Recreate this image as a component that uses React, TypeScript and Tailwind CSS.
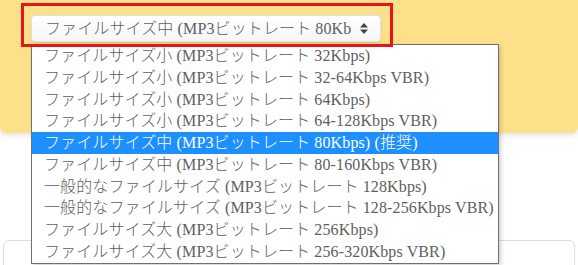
const options = [
  "ファイルサイズ小 (MP3ビットレート 32Kbps)",
  "ファイルサイズ小 (MP3ビットレート 32-64Kbps VBR)",
  "ファイルサイズ小 (MP3ビットレート 64Kbps)",
  "ファイルサイズ小 (MP3ビットレート 64-128Kbps VBR)",
  "ファイルサイズ中 (MP3ビットレート 80Kbps) (推奨)",
  "ファイルサイズ中 (MP3ビットレート 80-160Kbps VBR)",
  "一般的なファイルサイズ (MP3ビットレート 128Kbps)",
  "一般的なファイルサイズ (MP3ビットレート 128-256Kbps VBR)",
  "ファイルサイズ大 (MP3ビットレート 256Kbps)",
  "ファイルサイズ大 (MP3ビットレート 256-320Kbps VBR)",
];

const selected = 4;

export default function App() {
  return (
    <div className="relative w-[578px] h-[265px] overflow-hidden bg-white font-['Liberation_Serif','Noto_Sans_CJK_JP',serif] text-[16px] font-light tracking-[0.12px] text-[#606060]">
      {/* yellow panel */}
      <div className="h-[133px] rounded-b-[6px] bg-[#fde18a] pt-[15px] pl-[31px] shadow-[0_2px_6px_rgba(0,0,0,0.12)]">
        <div className="flex h-[27px] w-[350px] items-center justify-between rounded-[4px] border border-[#e2e2e2] bg-gradient-to-b from-white to-[#f6f6f6] pl-[13px] pr-[12px] shadow-[0_1px_2px_rgba(0,0,0,0.15)]">
          <span className="whitespace-nowrap">ファイルサイズ中 (MP3ビットレート 80Kb</span>
          <svg width="8" height="11" viewBox="0 0 8 11" className="shrink-0">
            <path d="M4 0 L8 4.5 L0 4.5 Z M0 6.5 L8 6.5 L4 11 Z" fill="#444" />
          </svg>
        </div>
      </div>

      {/* card below */}
      <div className="mx-[3px] mt-[107px] h-[40px] rounded-t-[6px] border border-[#dedede]" />

      {/* open dropdown list */}
      <ul className="absolute left-[31px] top-[44px] w-[468px] border border-[#707070] bg-white shadow-[2px_2px_4px_rgba(0,0,0,0.18)]">
        {options.map((o, i) => (
          <li
            key={o}
            className={
              i === selected
                ? "flex h-[21.8px] items-center whitespace-nowrap bg-[#1e8fff] pl-[12px] text-white"
                : "flex h-[21.8px] items-center whitespace-nowrap pl-[12px]"
            }
          >
            {o}
          </li>
        ))}
      </ul>

      {/* red annotation frame */}
      <div className="pointer-events-none absolute left-[21px] top-[3px] h-[44px] w-[372px] border-[3px] border-[#e8141b]" />
    </div>
  );
}
